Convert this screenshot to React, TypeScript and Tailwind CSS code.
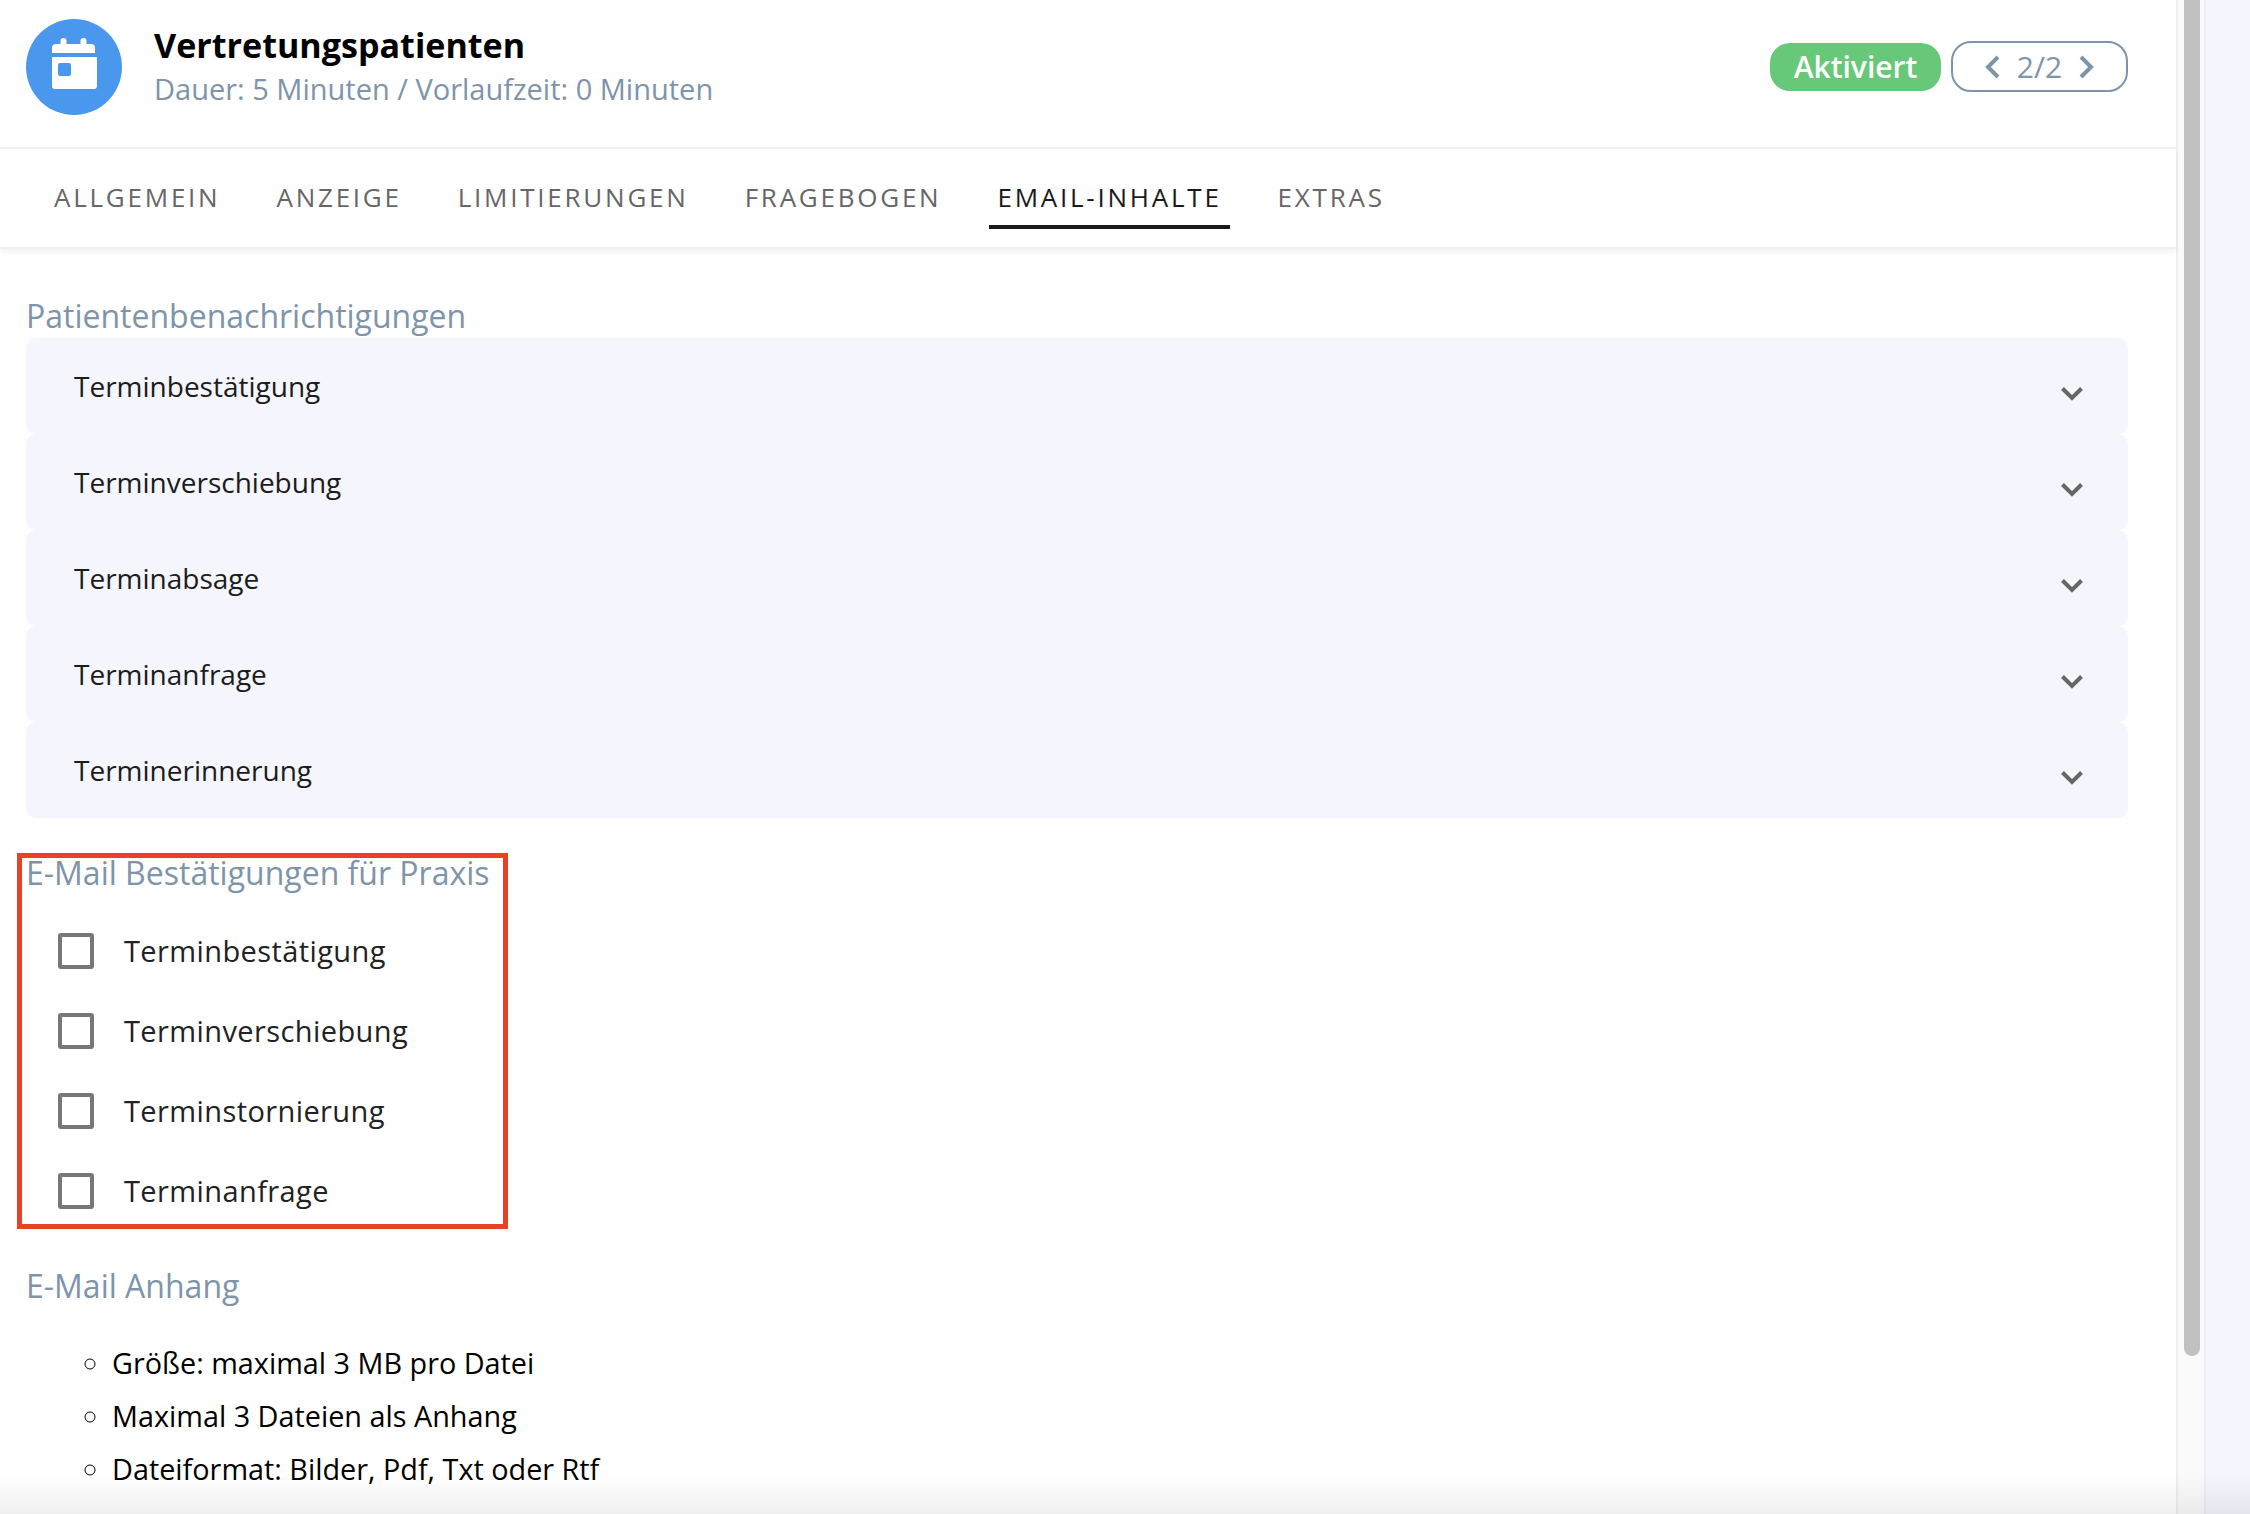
import React from "react";

const font = { fontFamily: '"Open Sans", "Noto Sans", sans-serif' };

const tabs = ["ALLGEMEIN", "ANZEIGE", "LIMITIERUNGEN", "FRAGEBOGEN", "EMAIL-INHALTE", "EXTRAS"];
const acc = ["Terminbestätigung", "Terminverschiebung", "Terminabsage", "Terminanfrage", "Terminerinnerung"];
const checks = ["Terminbestätigung", "Terminverschiebung", "Terminstornierung", "Terminanfrage"];
const bullets = ["Größe: maximal 3 MB pro Datei", "Maximal 3 Dateien als Anhang", "Dateiformat: Bilder, Pdf, Txt oder Rtf"];

export default function App() {
  return (
    <div style={font} className="relative flex h-[1514px] w-[2250px] overflow-hidden bg-[#f4f5fd]">
      <main className="flex h-full w-[2178px] shrink-0 flex-col border-r-2 border-[#eeeeee] bg-white">
        <header className="flex h-[149px] shrink-0 items-start border-b-2 border-[#f1f2f4] pl-[26px] pr-[48px]">
          <div className="mt-[19px] h-[96px] w-[96px] rounded-full bg-[#4a98ee]">
            <svg viewBox="0 0 96 96" className="h-[96px] w-[96px]" fill="white">
              <rect x="34.500" y="19" width="6" height="12" rx="3" />
              <rect x="54.500" y="19" width="6" height="12" rx="3" />
              <path d="M26 29a4 4 0 0 1 4-4h35a4 4 0 0 1 4 4v5H26z" />
              <path fillRule="evenodd" d="M26 38h45v29a3 3 0 0 1-3 3H29a3 3 0 0 1-3-3z M34 44a2 2 0 0 0-2 2v9a2 2 0 0 0 2 2h9a2 2 0 0 0 2-2v-9a2 2 0 0 0-2-2z" />
            </svg>
          </div>
          <div className="ml-[32px] mt-[21px] flex flex-col">
            <div className="text-[34.1px] font-bold leading-[48px] text-black">Vertretungspatienten</div>
            <div className="text-[29px] leading-[40px] text-[#7e94aa]">Dauer: 5 Minuten / Vorlaufzeit: 0 Minuten</div>
          </div>
          <div className="ml-auto mt-[41px] flex items-center gap-[10px]">
            <div className="flex h-[48px] w-[171px] items-center justify-center rounded-[20px] bg-[#66c878] text-[30px] font-semibold text-white">Aktiviert</div>
            <div className="flex h-[51px] w-[177px] items-center justify-center gap-[17px] rounded-[20px] border-2 border-[#7e94aa] text-[30px] text-[#7e94aa]">
              <svg viewBox="0 0 15 24" fill="none" stroke="currentColor" strokeWidth={4} className="h-[24px] w-[15px]">
                <path d="M13 2 L3 12 L13 22" />
              </svg>
              <span>2/2</span>
              <svg viewBox="0 0 15 24" fill="none" stroke="currentColor" strokeWidth={4} className="h-[24px] w-[15px]">
                <path d="M2 2 L12 12 L2 22" />
              </svg>
            </div>
          </div>
        </header>

        <nav className="flex h-[100px] shrink-0 items-start gap-[40px] border-b-2 border-[#eef0f3] pl-[46px] shadow-[0_3px_6px_rgba(0,0,0,0.06)]">
          {tabs.map((t) => {
            const active = t === "EMAIL-INHALTE";
            return (
              <div key={t} className={`mt-[22px] flex h-[58px] items-center px-[8px] pb-[2px] text-[26px] font-medium tracking-[2.76px] ${active ? "border-b-4 border-[#1a1a1a] text-[#1a1a1a]" : "border-b-4 border-transparent text-[#666666]"}`}>
                {t}
              </div>
            );
          })}
        </nav>

        <div className="flex flex-1 flex-col pl-[26px] pr-[48px]">
          <h2 className="mt-[45px] h-[44px] text-[32px] leading-[44px] text-[#7e94aa]">Patientenbenachrichtigungen</h2>
          <div className="flex flex-col">
            {acc.map((a) => (
              <div key={a} className="flex h-[96px] items-center justify-between rounded-[10px] bg-[#f4f5fd] pl-[48px] pr-[45px]">
                <span className="text-[28px] text-[#1c1c1c]">{a}</span>
                <svg viewBox="0 0 22 14" fill="none" stroke="#666666" strokeWidth={4} className="mt-[16px] h-[14px] w-[22px]">
                  <path d="M1.500 1.500 L11 11 L20.500 1.500" />
                </svg>
              </div>
            ))}
          </div>

          <section className="relative mt-[32px]">
            <h2 className="h-[46px] text-[32px] leading-[46px] text-[#7e94aa]">E-Mail Bestätigungen für Praxis</h2>
            <div className="mt-[15px] flex flex-col">
              {checks.map((c) => (
                <label key={c} className="flex h-[80px] items-center pl-[32px]">
                  <span className="h-[36px] w-[36px] rounded-[3px] border-[4px] border-[#777777]" />
                  <span className="ml-[30px] text-[29px] tracking-[0.4px] text-[#222222]">{c}</span>
                </label>
              ))}
            </div>
            <div className="pointer-events-none absolute left-[-9px] top-[3px] h-[376px] w-[491px] border-[5px] border-[#e94126]" />
          </section>

          <h2 className="mt-[32px] h-[46px] text-[32px] leading-[46px] text-[#7e94aa]">E-Mail Anhang</h2>
          <ul className="mt-[27px] flex list-[circle] flex-col pl-[86px] text-[28.8px] text-black">
            {bullets.map((b) => (
              <li key={b} className="h-[53px] leading-[53px]">{b}</li>
            ))}
          </ul>
        </div>
      </main>

      <div className="h-full w-[28px] shrink-0 border-r-2 border-[#eeeeee] bg-[#fafafa] pl-[6px]">
        <div className="h-[1356px] w-[16px] rounded-b-[8px] bg-[#c1c1c1]" />
      </div>

      <div className="pointer-events-none absolute bottom-0 left-0 h-[40px] w-full bg-gradient-to-b from-transparent to-[#00000010]" />
    </div>
  );
}
